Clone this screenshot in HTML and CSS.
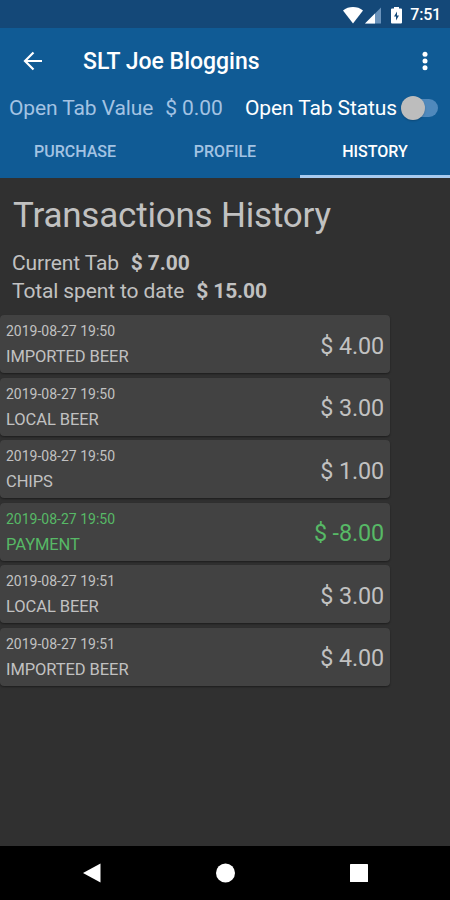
FILE: index.html
```html
<!DOCTYPE html>
<html lang="en">
<head>
<meta charset="utf-8">
<title>SLT Joe Bloggins</title>
<link rel="stylesheet" href="styles.css">
</head>
<body>
<div class="screen">
  <div class="status">
    <svg width="62" height="20" viewBox="0 0 62 20">
      <path d="M0 5.500C5.500 .9 14.500 .9 20 5.500L10 18.500Z" fill="#fff"/>
      <path d="M22 18.500L38 2.500V18.500Z" fill="#6b93bb"/>
      <path d="M22 18.500L32 8.500V18.500Z" fill="#fff"/>
      <path d="M49 3.500H51V2H56V3.500H58Q59 3.500 59 4.500V17.500Q59 18.500 58 18.500H49Q48 18.500 48 17.500V4.500Q48 3.500 49 3.500Z" fill="#fff"/>
      <path d="M54 6.500L51 11.500H53V15.500L56 10.500H54Z" fill="#144878"/>
    </svg>
    <span class="clock">7:51</span>
  </div>
  <header class="header">
    <div class="toolbar">
      <svg class="back" width="20" height="20" viewBox="0 0 20 20"><path d="M19 10H2M10.500 1.500L2 10L10.500 18.500" fill="none" stroke="#fff" stroke-width="2.200"/></svg>
      <h1 class="title">SLT Joe Bloggins</h1>
      <svg class="more" width="6" height="20" viewBox="0 0 6 20" fill="#fff"><circle cx="3" cy="3.200" r="2.500"/><circle cx="3" cy="10" r="2.500"/><circle cx="3" cy="16.800" r="2.500"/></svg>
    </div>
    <div class="tabinfo">
      <span class="label">Open Tab Value</span>
      <span class="value">$ 0.00</span>
      <span class="state">Open Tab Status</span>
      <span class="switch"><span class="knob"></span></span>
    </div>
    <nav class="tabs">
      <span class="tab">PURCHASE</span>
      <span class="tab">PROFILE</span>
      <span class="tab active">HISTORY</span>
    </nav>
  </header>
  <main class="content">
    <h2 class="heading">Transactions History</h2>
    <p class="sum"><span class="current">Current Tab</span><b>$ 7.00</b></p>
    <p class="sum"><span class="total">Total spent to date</span><b>$ 15.00</b></p>
    <div class="list">
      <div class="card"><div><div class="date">2019-08-27 19:50</div><div class="name">IMPORTED BEER</div></div><span class="amount">$ 4.00</span></div>
      <div class="card"><div><div class="date">2019-08-27 19:50</div><div class="name">LOCAL BEER</div></div><span class="amount">$ 3.00</span></div>
      <div class="card"><div><div class="date">2019-08-27 19:50</div><div class="name">CHIPS</div></div><span class="amount">$ 1.00</span></div>
      <div class="card payment"><div><div class="date">2019-08-27 19:50</div><div class="name">PAYMENT</div></div><span class="amount">$ -8.00</span></div>
      <div class="card"><div><div class="date">2019-08-27 19:51</div><div class="name">LOCAL BEER</div></div><span class="amount">$ 3.00</span></div>
      <div class="card"><div><div class="date">2019-08-27 19:51</div><div class="name">IMPORTED BEER</div></div><span class="amount">$ 4.00</span></div>
    </div>
  </main>
  <footer class="navbar">
    <svg width="18" height="20" viewBox="0 0 18 20"><path d="M0 10L17.500 .5V19.500Z" fill="#fff"/></svg>
    <svg width="20" height="20" viewBox="0 0 20 20"><circle cx="9.500" cy="10" r="9.500" fill="#fff"/></svg>
    <svg width="18" height="20" viewBox="0 0 18 20"><rect y="1" width="18" height="18" rx=".6" fill="#fff"/></svg>
  </footer>
</div>
</body>
</html>
```

FILE: styles.css
```css
* { box-sizing: border-box; }
body { margin: 0; font-family: Roboto, sans-serif; background: #303030; }
h1, h2, p { margin: 0; font-weight: 400; }
span, div, h1, h2, p { white-space: nowrap; }
.screen { width: 450px; height: 900px; display: flex; flex-direction: column; overflow: hidden; }
.status { height: 28px; background: #144878; display: flex; justify-content: flex-end; align-items: center; padding: 2px 9px 0 0; color: #fff; }
.status svg { margin: 0 5px 0 0; }
.clock { font-size: 16px; line-height: 20px; font-weight: 500; letter-spacing: -.2px; }
.header { height: 150px; background: #105b95; color: #fff; display: flex; flex-direction: column; }
.toolbar { height: 66px; display: flex; align-items: center; padding: 0 22px 0 23px; }
.title { font-size: 23px; font-weight: 500; margin-left: 40px; flex: 1; padding-top: 1px; }
.tabinfo { height: 28px; display: flex; align-items: center; font-size: 21px; letter-spacing: -.1px; padding: 0 12px 0 9px; }
.label, .value { color: #a3c3e3; }
.value { margin-left: 12px; }
.state { margin-left: auto; }
.switch { width: 33px; height: 18px; margin-left: 8px; border-radius: 9px; background: #5089bc; display: flex; align-items: center; }
.knob { flex: none; width: 24px; height: 24px; margin-left: -4px; border-radius: 50%; background: #bdbdbd; box-shadow: 0 1px 2px #0003; }
.tabs { flex: 1; display: grid; grid-template-columns: repeat(3, 1fr); }
.tab { text-align: center; font-size: 16px; line-height: 20px; padding-top: 20px; font-weight: 500; color: #a3c3e3; }
.tab.active { color: #fff; border-bottom: 3px solid #a8caef; }
.content { flex: 1; background: #303030; color: #c1c1c1; }
.heading { font-size: 35px; letter-spacing: -.2px; line-height: 44px; padding: 16px 0 0 13px; }
.heading + .sum { margin-top: 11px; }
.sum { font-size: 21px; line-height: 28px; padding-left: 12px; letter-spacing: -.13px; }
.sum b { font-weight: 700; margin-left: 12px; }
.list { width: 390px; margin-top: 10px; display: flex; flex-direction: column; gap: 4.500px; }
.card { height: 58px; border-radius: 4px; background: #424242; display: flex; align-items: center; justify-content: space-between; padding: 0 6px; box-shadow: 0 1px 2px #0006; }
.date { font-size: 14px; line-height: 24px; padding-top: 2px; }
.name { font-size: 16.500px; line-height: 28px; letter-spacing: -.08px; }
.amount { font-size: 23.300px; letter-spacing: -.1px; padding-top: 3px; }
.payment { color: #57b966; }
.navbar { height: 54px; background: #000; display: flex; align-items: center; justify-content: space-between; padding: 0 82px 0 83px; }
```
